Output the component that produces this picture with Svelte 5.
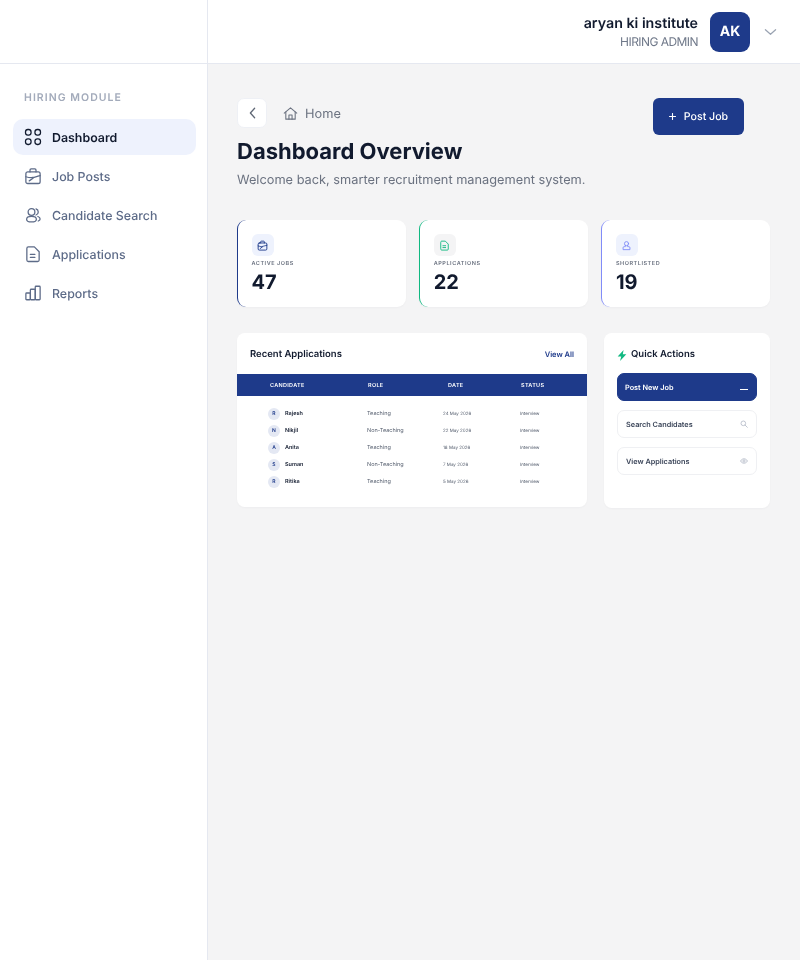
<script>
	const nav = [
		{ label: 'Dashboard', icon: 'grid', active: true },
		{ label: 'Job Posts', icon: 'case' },
		{ label: 'Candidate Search', icon: 'users' },
		{ label: 'Applications', icon: 'doc' },
		{ label: 'Reports', icon: 'bars' }
	]

	const stats = [
		{ label: 'ACTIVE JOBS', value: 47, icon: 'case', tone: 'navy' },
		{ label: 'APPLICATIONS', value: 22, icon: 'doc', tone: 'green' },
		{ label: 'SHORTLISTED', value: 19, icon: 'user', tone: 'violet' }
	]

	const rows = [
		{ name: 'Rajesh', role: 'Teaching', date: '24 May 2026' },
		{ name: 'Nikjil', role: 'Non-Teaching', date: '22 May 2026' },
		{ name: 'Anita', role: 'Teaching', date: '18 May 2026' },
		{ name: 'Suman', role: 'Non-Teaching', date: '7 May 2026' },
		{ name: 'Ritika', role: 'Teaching', date: '5 May 2026' }
	]
</script>

{#snippet icon(name)}
	<svg viewBox="0 0 24 24" fill="none" stroke="currentColor" stroke-width="1.7" stroke-linecap="round" stroke-linejoin="round">
		{#if name === 'grid'}
			<rect x="2" y="2" width="7.400" height="7.400" rx="3.200" /><rect x="14.600" y="2" width="7.400" height="7.400" rx="3.200" /><rect x="2" y="14.600" width="7.400" height="7.400" rx="3.200" /><rect x="14.600" y="14.600" width="7.400" height="7.400" rx="3.200" />
		{:else if name === 'case'}
			<rect x="2.500" y="6.500" width="19" height="15.500" rx="2.500" /><path d="M8 6.500V4A1.500 1.500 0 0 1 9.500 2.500h5A1.500 1.500 0 0 1 16 4v2.500" /><path d="M2.500 13c5 1.500 7 1.500 9.500 1s5-1.500 9.500-2.500" /><path d="M7 18.500l5-3.500" />
		{:else if name === 'users'}
			<circle cx="10" cy="8" r="4.500" /><ellipse cx="10" cy="17.500" rx="6.500" ry="3.800" /><path d="M16 3.800a4.300 4.300 0 0 1 0 8.200" /><path d="M18.500 14c2 .8 3 2 3 3.300 0 1.200-1 2.200-2.500 2.700" />
		{:else if name === 'doc'}
			<path d="M3.800 4.500a2 2 0 0 1 2-2h8l6.400 6.400v11.100a2 2 0 0 1-2 2H5.800a2 2 0 0 1-2-2z" /><path d="M8.500 12.500h6M8.500 16.500h6" />
		{:else if name === 'bars'}
			<rect x="2.500" y="12" width="6" height="9" rx="1" /><rect x="8.500" y="7" width="6.500" height="14" rx="1" /><rect x="15" y="3" width="6.500" height="18" rx="1" />
		{:else if name === 'user'}
			<circle cx="12" cy="8" r="4.500" /><path d="M9.500 12v2.500H7a2.500 2.500 0 0 0-2.500 2.500v4h15v-4a2.500 2.500 0 0 0-2.500-2.500h-2.500V12" />
		{/if}
	</svg>
{/snippet}

<div class="page">
	<aside class="sidebar">
		<div class="brand"></div>
		<div class="nav-wrap">
			<p class="nav-title">HIRING MODULE</p>
			<nav>
				{#each nav as item}
					<div class="nav-item" class:active={item.active}>
						<span class="nav-icon">{@render icon(item.icon)}</span>
						<span>{item.label}</span>
					</div>
				{/each}
			</nav>
		</div>
	</aside>

	<div class="content">
		<header class="topbar">
			<div class="who">
				<div class="who-name">aryan ki institute</div>
				<div class="who-role">HIRING ADMIN</div>
			</div>
			<div class="avatar">AK</div>
			<svg class="chevron" viewBox="0 0 14 8" fill="none" stroke="currentColor" stroke-width="1.3" stroke-linecap="round" stroke-linejoin="round">
				<path d="M1.500 1.500 7 6.500l5.500-5" />
			</svg>
		</header>

		<main>
			<div class="title-row">
				<div>
					<div class="crumbs">
						<button class="back" aria-label="Back">
							<svg viewBox="0 0 10 14" fill="none" stroke="currentColor" stroke-width="1.500" stroke-linecap="round" stroke-linejoin="round">
								<path d="M7.500 1.500 2.500 7l5 5.500" />
							</svg>
						</button>
						<svg class="home" viewBox="0 0 24 24" fill="none" stroke="currentColor" stroke-width="1.700" stroke-linecap="round" stroke-linejoin="round">
							<path d="M2 11.500 12 3l10 8.500" /><path d="M4.500 9.500V21h15V9.500" /><path d="M9.500 21v-6.500h5V21" />
						</svg>
						<span class="crumb">Home</span>
					</div>
					<h1>Dashboard Overview</h1>
					<p class="sub">Welcome back, smarter recruitment management system.</p>
				</div>
				<button class="post">
					<svg viewBox="0 0 7 7" fill="none" stroke="currentColor" stroke-width="1.100" stroke-linecap="round"><path d="M3.500.5v6M.5 3.500h6" /></svg>
					Post Job
				</button>
			</div>

			<section class="stats">
				{#each stats as s}
					<div class="stat {s.tone}">
						<span class="stat-icon">{@render icon(s.icon)}</span>
						<div class="stat-label">{s.label}</div>
						<div class="stat-value">{s.value}</div>
					</div>
				{/each}
			</section>

			<section class="lower">
				<div class="panel recent">
					<div class="recent-head">
						<h2>Recent Applications</h2>
						<span class="view-all">View All</span>
					</div>
					<div class="thead">
						<span>CANDIDATE</span>
						<span>ROLE</span>
						<span>DATE</span>
						<span>STATUS</span>
					</div>
					<div class="tbody">
						{#each rows as r}
							<div class="trow">
								<span class="person">
									<span class="initial">{r.name[0]}</span>
									<b>{r.name}</b>
								</span>
								<span>{r.role}</span>
								<span class="small">{r.date}</span>
								<span class="small">Interview</span>
							</div>
						{/each}
					</div>
				</div>

				<div class="panel quick">
					<h2 class="quick-title">
						<svg viewBox="0 0 12 14"><path d="M8 0 .5 8.200H5L3.500 14l8-8.500H7z" fill="#10b981" /></svg>
						Quick Actions
					</h2>
					<div class="action primary">
						<span>Post New Job</span>
						<i class="dash"></i>
					</div>
					<div class="action">
						<span>Search Candidates</span>
						<svg viewBox="0 0 12 12" fill="none" stroke="currentColor" stroke-width="1"><circle cx="5" cy="5" r="3.500" /><path d="M7.600 7.600 11 11" stroke-linecap="round" /></svg>
					</div>
					<div class="action">
						<span>View Applications</span>
						<svg viewBox="0 0 12 12" fill="none" stroke="currentColor" stroke-width="1"><path d="M.8 6C2 3.800 3.800 2.700 6 2.700S10 3.800 11.200 6C10 8.200 8.200 9.300 6 9.300S2 8.200.8 6z" /><circle cx="6" cy="6" r="1.700" /></svg>
					</div>
				</div>
			</section>
		</main>
	</div>
</div>

<style>
	:global(body) {
		background: #f4f4f5;
		font-family: Inter, "Liberation Sans", sans-serif;
		color: #111a2e;
		text-rendering: geometricPrecision;
	}

	.page {
		display: grid;
		grid-template-columns: 208px 1fr;
		height: 960px;
		overflow: hidden;
		will-change: transform;
	}

	.sidebar {
		background: #fff;
		border-right: 1px solid #e5e8f0;
	}
	.brand {
		height: 63px;
		border-bottom: 1px solid #e5e8f0;
	}
	.nav-wrap {
		padding: 27px 11px 0 13px;
	}
	.nav-title {
		margin: 0 0 15px 11px;
		font-size: 10.500px;
		line-height: 13px;
		font-weight: 600;
		letter-spacing: 1.050px;
		color: #a3abbb;
	}
	.nav-item {
		display: flex;
		align-items: center;
		gap: 10px;
		height: 36px;
		margin-bottom: 3px;
		padding-left: 11px;
		border-radius: 10px;
		font-size: 12.400px;
		font-weight: 500;
		color: #5d6b88;
	}
	.nav-item.active {
		background: #eef2fd;
		color: #111a2e;
		font-weight: 600;
	}
	.nav-icon {
		display: flex;
		width: 18px;
		height: 18px;
	}
	.nav-icon svg {
		width: 18px;
		height: 18px;
	}

	.topbar {
		display: flex;
		align-items: center;
		justify-content: flex-end;
		height: 63px;
		padding-right: 23px;
		background: #fff;
		border-bottom: 1px solid #e5e8f0;
	}
	.who {
		text-align: right;
		margin-right: 12px;
	}
	.who-name {
		font-size: 14.250px;
		line-height: 17px;
		margin-bottom: 2px;
		font-weight: 600;
	}
	.who-role {
		font-size: 12px;
		line-height: 15px;
		letter-spacing: -0.550px;
		color: #6f7889;
	}
	.avatar {
		display: flex;
		align-items: center;
		justify-content: center;
		width: 40px;
		height: 40px;
		border-radius: 9px;
		background: #1e3a8a;
		color: #fff;
		font-size: 14px;
		font-weight: 700;
	}
	.chevron {
		width: 13px;
		height: 8px;
		margin-left: 14px;
		color: #9aa3b2;
	}

	main {
		padding: 34px 30px 0 29px;
	}
	.title-row {
		display: flex;
		justify-content: space-between;
		align-items: flex-start;
		padding-right: 26px;
	}
	.crumbs {
		display: flex;
		align-items: center;
		font-size: 12.800px;
		color: #6b7280;
	}
	.crumb {
		padding-top: 2px;
	}
	.back {
		display: flex;
		align-items: center;
		justify-content: center;
		width: 30px;
		height: 30px;
		padding: 0;
		margin-right: 16px;
		background: #fff;
		border: 1px solid #eef0f5;
		border-radius: 7px;
		color: #5f6775;
	}
	.back svg {
		width: 9px;
		height: 12px;
	}
	.home {
		width: 15px;
		height: 15px;
		margin-right: 7px;
	}
	h1 {
		margin: 10px 0 0;
		font-size: 22px;
		line-height: 28px;
		font-weight: 700;
	}
	.sub {
		margin: 7px 0 0;
		font-size: 12.780px;
		line-height: 16px;
		color: #6b7280;
	}
	.post {
		display: flex;
		align-items: center;
		justify-content: center;
		gap: 8px;
		width: 91px;
		height: 37px;
		background: #1e3a8a;
		border: none;
		border-radius: 6px;
		color: #fff;
		font: 500 10.600px Inter, sans-serif;
		text-rendering: geometricPrecision;
	}
	.post svg {
		width: 7px;
		height: 7px;
	}

	.stats {
		display: grid;
		grid-template-columns: repeat(3, 1fr);
		gap: 13.600px;
		margin-top: 31px;
	}
	.stat {
		height: 87px;
		box-sizing: border-box;
		padding: 14px 14px 0 13.500px;
		background: #fff;
		border-radius: 9px;
		border-left: 1px solid var(--tone);
		box-shadow: 0 1px 2px rgba(20, 30, 60, 0.030);
		--tone: #1e3a8a;
		--chip: #eef2fd;
	}
	.stat.green {
		--tone: #10b981;
		--chip: #f4f4f5;
	}
	.stat.violet {
		--tone: #818cf8;
		--chip: #eef2fd;
	}
	.stat-icon {
		display: flex;
		align-items: center;
		justify-content: center;
		width: 22px;
		height: 22px;
		border-radius: 6px;
		background: var(--chip);
		color: var(--tone);
	}
	.stat-icon svg {
		width: 11px;
		height: 11px;
		stroke-width: 2;
	}
	.stat-label {
		margin-top: 5px;
		font-size: 5.500px;
		line-height: 7px;
		font-weight: 600;
		letter-spacing: 0.550px;
		color: #6b7280;
	}
	.stat-value {
		margin-top: 2px;
		font-size: 20px;
		line-height: 24px;
		font-weight: 700;
	}

	.lower {
		display: grid;
		grid-template-columns: 350px 166px;
		justify-content: space-between;
		align-items: start;
		margin-top: 26px;
	}
	.panel {
		background: #fff;
		border-radius: 8px;
		box-shadow: 0 1px 2px rgba(20, 30, 60, 0.030);
	}
	.recent {
		height: 174px;
	}
	.recent-head {
		display: flex;
		align-items: center;
		justify-content: space-between;
		box-sizing: border-box;
		height: 41px;
		padding: 2px 13px 0;
	}
	h2 {
		margin: 0;
		font-size: 9.500px;
		line-height: 12px;
		font-weight: 600;
	}
	.view-all {
		font-size: 7.500px;
		font-weight: 600;
		color: #1e3a8a;
	}
	.thead {
		display: grid;
		grid-template-columns: 98px 80px 73px 1fr;
		align-items: center;
		box-sizing: border-box;
		height: 22px;
		padding: 2px 0 0 33px;
		background: #1e3a8a;
		color: #fff;
		font-size: 5.500px;
		font-weight: 600;
		letter-spacing: 0.300px;
	}
	.tbody {
		padding-top: 9px;
	}
	.trow {
		display: grid;
		grid-template-columns: 99px 76px 77px 1fr;
		align-items: center;
		height: 17px;
		padding-left: 31px;
		font-size: 5.500px;
		color: #555e6e;
	}
	.small {
		padding-top: 2px;
		font-size: 4.500px;
	}
	.person {
		display: flex;
		align-items: center;
		gap: 5px;
	}
	.person b {
		font-weight: 600;
		color: #111a2e;
	}
	.initial {
		display: flex;
		align-items: center;
		justify-content: center;
		width: 12px;
		height: 12px;
		border-radius: 50%;
		background: #e4e8f3;
		color: #1e3a8a;
		font-size: 5px;
		font-weight: 600;
	}

	.quick {
		height: 175px;
		box-sizing: border-box;
		padding: 15px 13px 0 13px;
	}
	.quick-title {
		display: flex;
		align-items: center;
		gap: 4px;
		height: 12px;
		padding-top: 1px;
		margin-bottom: 12px;
	}
	.quick-title svg {
		width: 10px;
		height: 11px;
	}
	.action {
		display: flex;
		align-items: center;
		justify-content: space-between;
		height: 28px;
		margin-bottom: 9px;
		padding: 0 8px;
		box-sizing: border-box;
		border: 1px solid #eff0f3;
		border-radius: 7px;
		font-size: 7.300px;
		font-weight: 600;
		color: #3c465a;
	}
	.action svg {
		width: 8px;
		height: 8px;
		color: #a3abbb;
	}
	.action.primary {
		background: #1e3a8a;
		border-color: #1e3a8a;
		color: #fff;
		align-items: flex-start;
		padding: 9px 8px 0 7px;
	}
	.dash {
		width: 8px;
		height: 1px;
		margin-top: 6px;
		background: #fff;
	}
</style>
